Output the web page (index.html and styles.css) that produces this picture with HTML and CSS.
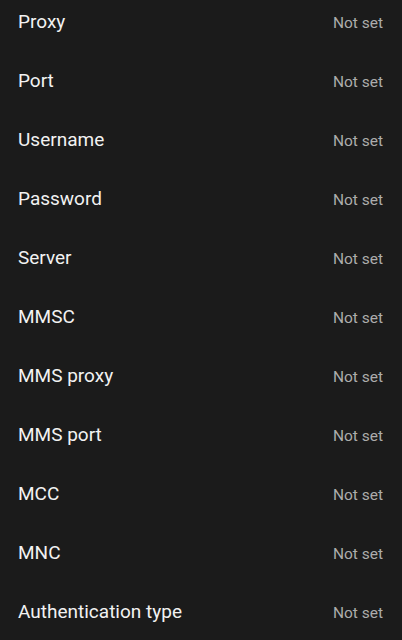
FILE: index.html
```html
<!DOCTYPE html>
<html>
<head>
<meta charset="utf-8">
<link rel="stylesheet" href="styles.css">
</head>
<body>
<div class="list">
  <div class="row"><span class="label">Proxy</span><span class="value">Not set</span></div>
  <div class="row"><span class="label">Port</span><span class="value">Not set</span></div>
  <div class="row"><span class="label">Username</span><span class="value">Not set</span></div>
  <div class="row"><span class="label">Password</span><span class="value">Not set</span></div>
  <div class="row"><span class="label">Server</span><span class="value">Not set</span></div>
  <div class="row"><span class="label">MMSC</span><span class="value">Not set</span></div>
  <div class="row"><span class="label">MMS proxy</span><span class="value">Not set</span></div>
  <div class="row"><span class="label">MMS port</span><span class="value">Not set</span></div>
  <div class="row"><span class="label">MCC</span><span class="value">Not set</span></div>
  <div class="row"><span class="label">MNC</span><span class="value">Not set</span></div>
  <div class="row"><span class="label">Authentication type</span><span class="value">Not set</span></div>
</div>
</body>
</html>
```

FILE: styles.css
```css
html, body {
  margin: 0;
  padding: 0;
  background: #1b1b1b;
  height: 100%;
  overflow: hidden;
}
.list {
  margin-top: -8px;
  display: flex;
  flex-direction: column;
  font-family: Roboto, "Noto Sans", sans-serif;
}
.row {
  height: 59px;
  display: flex;
  align-items: baseline;
  justify-content: space-between;
  padding: 0 19px 0 18px;
}
.label {
  color: #f2f2f2;
  font-size: 19px;
  line-height: 59px;
}
.value {
  color: #acacac;
  font-size: 15.5px;
}
```
